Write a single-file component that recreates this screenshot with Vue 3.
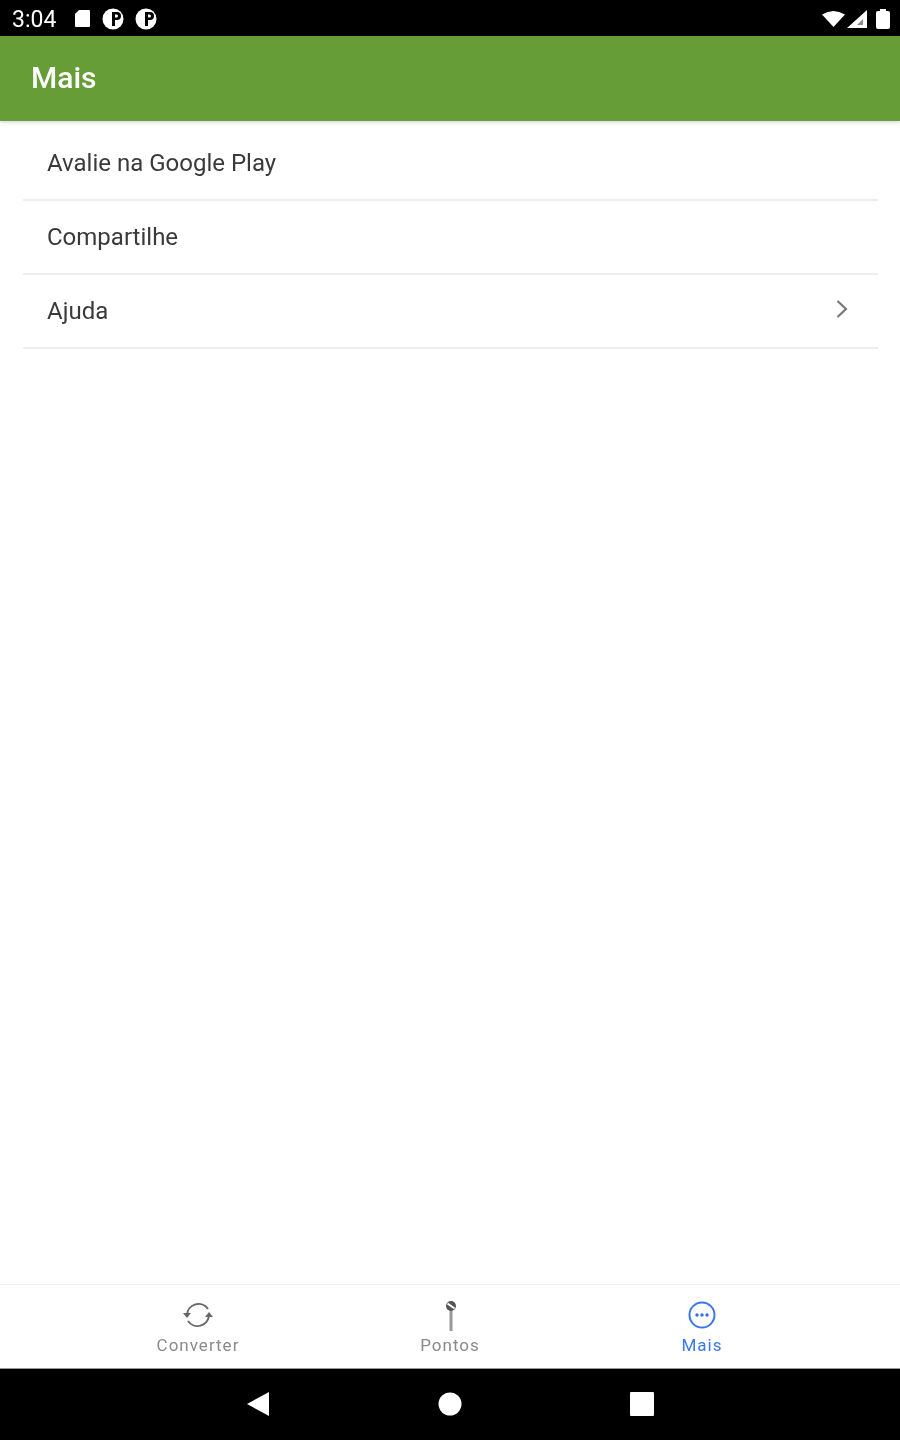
<template>
  <div class="screen">
    <div class="status-bar">
      <span class="clock soft">3:04</span>
      <div class="status-icons soft">
        <svg width="17" height="19" viewBox="0 0 17 19"><path d="M5 1h10a1 1 0 0 1 1 1v15a1 1 0 0 1-1 1H2a1 1 0 0 1-1-1V5z" fill="#fff"/></svg>
        <svg v-for="n in 2" :key="n" width="22" height="22" viewBox="0 0 22 22">
          <circle cx="11" cy="11" r="10.500" fill="#fff"/>
          <path d="M10 4h5a4 4 0 0 1 0 8h-2v6h-3z" fill="#000"/>
          <path d="M13 6.500h1.500a1.500 1.500 0 0 1 0 3H13z" fill="#fff"/>
        </svg>
      </div>
      <div class="system-icons soft">
        <svg class="wifi" width="23" height="17" viewBox="0 0 23 17"><path d="M0 4.500Q11.500-2.500 23 4.500L11.500 17z" fill="#fff"/></svg>
        <svg class="signal" width="20" height="18" viewBox="0 0 20 18"><path d="M0 18L20 0v18z" fill="#fff"/><path d="M10 15h6V9z" fill="#000" opacity=".45"/></svg>
        <svg width="14" height="20" viewBox="0 0 14 20"><path d="M4 0h6v2h2a2 2 0 0 1 2 2v14a2 2 0 0 1-2 2H2a2 2 0 0 1-2-2V4a2 2 0 0 1 2-2h2z" fill="#fff"/></svg>
      </div>
    </div>

    <header class="app-header"><span class="soft">Mais</span></header>

    <ul class="menu">
      <li v-for="item in items" :key="item.label" class="menu-item">
        <span class="soft">{{ item.label }}</span>
        <svg v-if="item.arrow" class="chevron soft" width="14" height="20" viewBox="0 0 14 20">
          <path d="M2.500 2l8.500 8-8.500 8" fill="none" stroke="#777" stroke-width="2.200"/>
        </svg>
      </li>
    </ul>

    <nav class="tab-bar">
      <div class="tab soft">
        <svg width="32" height="28" viewBox="0 0 32 28" fill="none" stroke="#666" stroke-width="2">
          <path d="M5 14A11.500 11.500 0 0 1 26 8"/>
          <path d="M27 14A11.500 11.500 0 0 1 6 20"/>
          <path d="M1 12h8l-4 5zM23 16h8l-4-5z" fill="#666" stroke="none"/>
        </svg>
        <span>Converter</span>
      </div>
      <div class="tab soft">
        <svg width="32" height="30" viewBox="0 0 32 30">
          <rect x="15.500" y="9" width="3" height="21" fill="#999"/>
          <circle cx="17" cy="5" r="5" fill="#555"/>
          <path d="M13.500 2.500l7 5" stroke="#fff" stroke-width="2"/>
        </svg>
        <span>Pontos</span>
      </div>
      <div class="tab active soft">
        <svg width="32" height="28" viewBox="0 0 32 28" fill="none">
          <circle cx="16" cy="14" r="12.500" stroke="#3a78f0" stroke-width="2"/>
          <circle cx="11" cy="14" r="1.700" fill="#2f6fed"/>
          <circle cx="16" cy="14" r="1.700" fill="#2f6fed"/>
          <circle cx="21" cy="14" r="1.700" fill="#2f6fed"/>
        </svg>
        <span>Mais</span>
      </div>
    </nav>

    <div class="nav-bar">
      <svg class="soft" width="24" height="26" viewBox="0 0 24 26"><path d="M1 13L23 1v24z" fill="#fff"/></svg>
      <svg class="soft" width="24" height="24" viewBox="0 0 24 24"><circle cx="12" cy="12" r="11.500" fill="#fff"/></svg>
      <svg class="soft" width="24" height="24" viewBox="0 0 24 24"><rect width="24" height="24" rx="1" fill="#fff"/></svg>
    </div>
  </div>
</template>

<script setup>
const items = [
  { label: 'Avalie na Google Play' },
  { label: 'Compartilhe' },
  { label: 'Ajuda', arrow: true }
]
</script>

<style scoped>
.screen {
  display: flex;
  flex-direction: column;
  width: 900px;
  height: 1440px;
  background: #fff;
  font-family: Roboto, "Liberation Sans", sans-serif;
  overflow: hidden;
}

/* the reference is an upscaled capture, everything in it is a bit soft */
.soft {
  filter: blur(0.7px);
}

.status-bar {
  display: flex;
  align-items: center;
  height: 36px;
  padding: 1px 10px 0 12px;
  box-sizing: border-box;
  background: #000;
  color: #fff;
  flex-shrink: 0;
}

.clock {
  font-size: 23px;
  width: 62px;
  margin-top: 1px;
}

.status-icons {
  display: flex;
  align-items: center;
  gap: 11px;
}

.system-icons {
  display: flex;
  align-items: center;
  margin-left: auto;
}

.signal {
  margin: 0 9px 0 2px;
}

.app-header {
  display: flex;
  align-items: center;
  height: 85px;
  padding: 0 0 2px 31px;
  box-sizing: border-box;
  background: #669d37;
  color: #fff;
  font-size: 30px;
  font-weight: 500;
  box-shadow: 0 1px 4px rgba(0, 0, 0, 0.2);
  flex-shrink: 0;
  position: relative;
}

.menu {
  flex: 1;
  list-style: none;
  margin: 0;
  padding: 6px 22px 0 23px;
}

.menu-item {
  display: flex;
  align-items: center;
  justify-content: space-between;
  box-sizing: border-box;
  height: 74px;
  padding: 0 29px 1px 24px;
  border-bottom: 2px solid #eeeeee;
  color: #3a3a3a;
  font-size: 24px;
}

.chevron {
  margin-bottom: 4px;
}

.tab-bar {
  display: flex;
  height: 85px;
  padding: 0 72px;
  box-sizing: border-box;
  border-top: 1px solid #f0f0f0;
  border-bottom: 1px solid #999;
  flex-shrink: 0;
}

.tab {
  flex: 1;
  display: flex;
  flex-direction: column;
  align-items: center;
  padding-top: 16px;
  color: #8a8a8a;
  font-size: 17px;
  letter-spacing: 1px;
}

.tab span {
  margin-top: 6px;
}

.tab:nth-child(2) span {
  margin-top: 4px;
}

.tab.active {
  color: #3a78f0;
}

.nav-bar {
  display: flex;
  align-items: center;
  justify-content: center;
  gap: 168px;
  height: 71px;
  padding-bottom: 2px;
  box-sizing: border-box;
  background: #000;
  flex-shrink: 0;
}
</style>
